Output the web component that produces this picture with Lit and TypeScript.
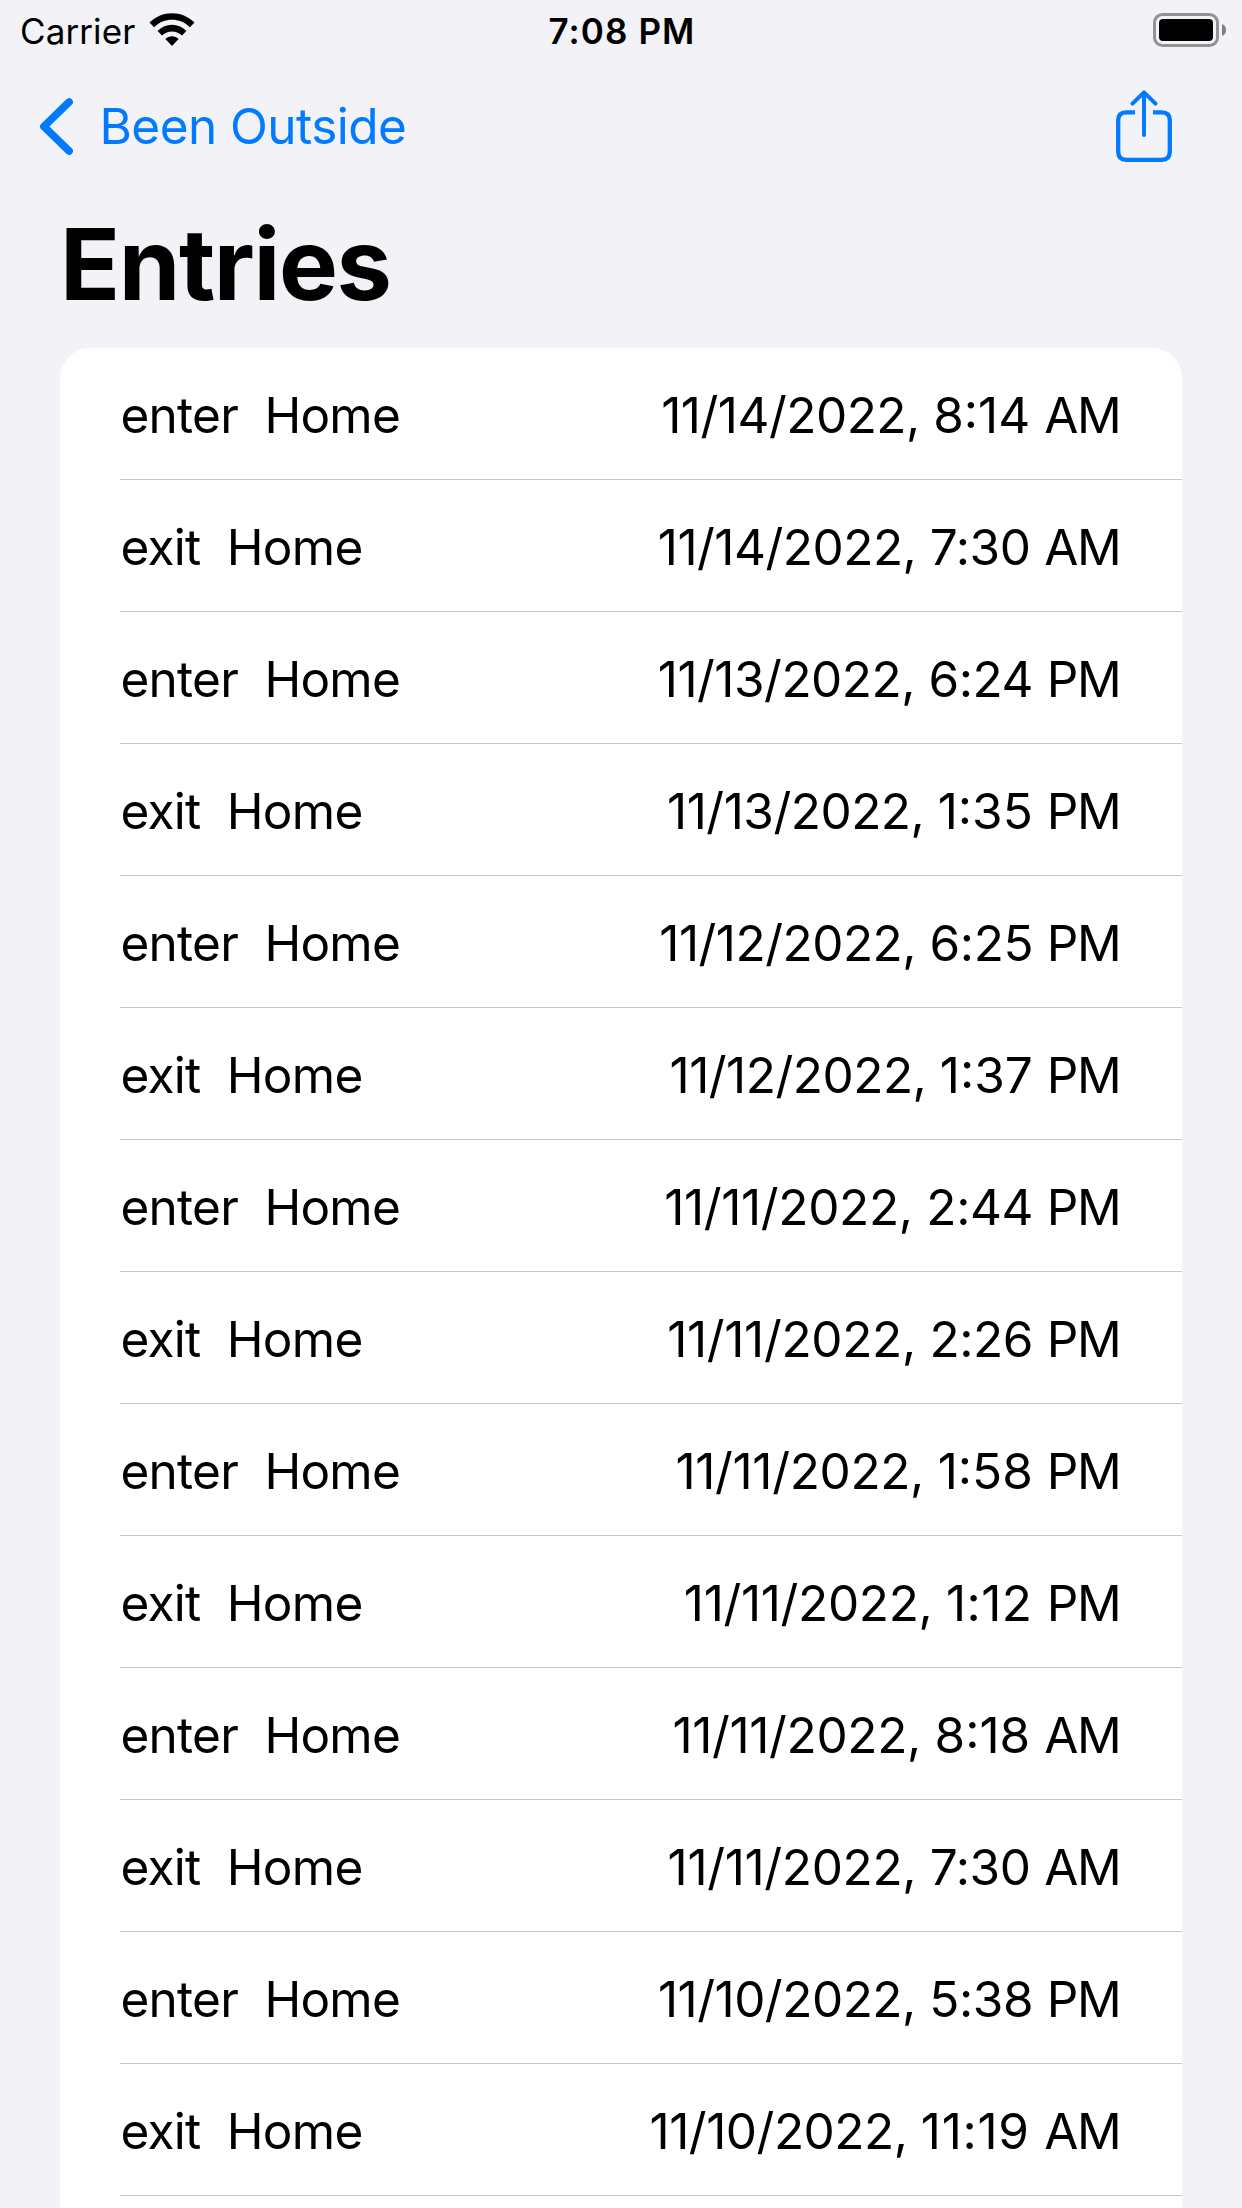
import { LitElement, html, css } from "lit";
import { customElement, property } from "lit/decorators.js";
import { styleMap } from "lit/directives/style-map.js";

interface Entry {
  kind: string;
  place: string;
  day: string;
  time: string;
  half: string;
}

const entry = (kind: string, day: string, time: string, half: string): Entry => ({
  kind,
  place: "Home",
  day,
  time,
  half,
});

const ENTRIES: Entry[] = [
  entry("enter", "11/14/2022", "8:14", "AM"),
  entry("exit", "11/14/2022", "7:30", "AM"),
  entry("enter", "11/13/2022", "6:24", "PM"),
  entry("exit", "11/13/2022", "1:35", "PM"),
  entry("enter", "11/12/2022", "6:25", "PM"),
  entry("exit", "11/12/2022", "1:37", "PM"),
  entry("enter", "11/11/2022", "2:44", "PM"),
  entry("exit", "11/11/2022", "2:26", "PM"),
  entry("enter", "11/11/2022", "1:58", "PM"),
  entry("exit", "11/11/2022", "1:12", "PM"),
  entry("enter", "11/11/2022", "8:18", "AM"),
  entry("exit", "11/11/2022", "7:30", "AM"),
  entry("enter", "11/10/2022", "5:38", "PM"),
  entry("exit", "11/10/2022", "11:19", "AM"),
];

/* Narrow ones get a little more room than the other digits. */
const tracking = (text: string, slack: number) => {
  const ones = text.split("1").length - 1;
  return { letterSpacing: `${((2 * ones - slack) / text.length).toFixed(3)}px` };
};

@customElement("status-bar")
export class StatusBar extends LitElement {
  static styles = css`
    :host {
      display: grid;
      grid-template-columns: 1fr auto 1fr;
      align-items: center;
      height: 60px;
      padding: 0 16px 0 20px;
      box-sizing: border-box;
      font-size: 35px;
      line-height: 42px;
    }
    .left {
      display: flex;
      align-items: center;
      gap: 14px;
    }
    .carrier {
      padding-top: 2px;
      letter-spacing: 0.1px;
    }
    .time {
      padding: 2px 2px 0 0;
      font-weight: 560;
      letter-spacing: 1.1px;
    }
    .battery {
      justify-self: end;
    }
    svg {
      display: block;
    }
  `;

  render() {
    return html`
      <div class="left">
        <span class="carrier">Carrier</span>
        <svg width="46" height="34" viewBox="0 0 46 34">
          <path d="M0.5 9.6 C13 -3 33 -3 45.500 9.600 L40.900 14.200 C31 4.400 15 4.400 5.100 14.200 Z" />
          <path d="M8.600 18 C16.800 9.500 29.200 9.500 37.400 18 L33 22.500 C27.300 17 18.700 17 13 22.500 Z" />
          <path d="M16.400 26 C20.200 22.200 25.800 22.200 29.600 26 L23 33 Z" />
        </svg>
      </div>
      <span class="time">7:08 PM</span>
      <svg class="battery" width="73" height="34" viewBox="0 0 73 34">
        <rect x="1.500" y="1.500" width="63" height="31" rx="8" fill="none" stroke="#929195" stroke-width="3" />
        <rect x="6" y="6" width="54" height="22" rx="4" />
        <path d="M69 11 C74.300 12.500 74.300 21.500 69 23 Z" fill="#7f7f83" />
      </svg>
    `;
  }
}

@customElement("nav-bar")
export class NavBar extends LitElement {
  @property() back = "";

  static styles = css`
    :host {
      display: flex;
      justify-content: space-between;
      align-items: center;
      height: 132px;
      padding: 0 70px 0 40px;
      box-sizing: border-box;
      color: #007aff;
      font-size: 49.5px;
    }
    .back {
      display: flex;
      align-items: center;
      gap: 26.5px;
      letter-spacing: -0.55px;
    }
    svg {
      display: block;
      fill: none;
      stroke: currentColor;
    }
  `;

  render() {
    return html`
      <div class="back">
        <svg width="33" height="57" viewBox="0 0 33 57" stroke-width="7.600" stroke-linecap="round" stroke-linejoin="round">
          <path d="M29.100 4 L3.900 28.500 L29.100 53" />
        </svg>
        <span>${this.back}</span>
      </div>
      <svg width="56" height="72" viewBox="0 0 56 72" stroke-width="4.300">
        <path d="M19 22.300 H10.200 Q2.200 22.300 2.200 30.300 V61.800 Q2.200 69.800 10.200 69.800 H45.800 Q53.800 69.800 53.800 61.800 V30.300 Q53.800 22.300 45.800 22.300 H37" />
        <path d="M28 2.500 V45 M16.500 13.700 L28 2.300 L39.500 13.700" stroke-width="4" stroke-linecap="round" stroke-linejoin="round" />
      </svg>
    `;
  }
}

@customElement("entry-row")
export class EntryRow extends LitElement {
  @property({ attribute: false }) entry!: Entry;

  static styles = css`
    :host {
      display: block;
      padding-left: 60px;
    }
    .row {
      display: flex;
      justify-content: space-between;
      align-items: center;
      height: 132px;
      padding: 3px 61.4px 0 0.5px;
      box-sizing: border-box;
      border-bottom: 1px solid #c6c6c8;
      font-size: 49.5px;
      white-space: pre;
    }
    .name {
      letter-spacing: -0.75px;
      word-spacing: 0;
    }
    .half {
      letter-spacing: -1.2px;
    }
  `;

  render() {
    const { kind, place, day, time, half } = this.entry;
    const date = `${day}, `;
    const clock = `${time} `;
    return html`
      <div class="row">
        <span class="name">${kind}  ${place}</span>
        <span class="date"><span style=${styleMap(tracking(date, 12))}>${date}</span><span style=${styleMap(tracking(clock, 2))}>${clock}</span><span class="half">${half}</span></span>
      </div>
    `;
  }
}

@customElement("app-root")
export class AppRoot extends LitElement {
  static styles = css`
    :host {
      display: block;
      height: 2208px;
      overflow: hidden;
      background: #f2f2f7;
      color: #000;
      font-family: Inter, "Liberation Sans", sans-serif;
    }
    .title {
      margin: 0;
      height: 156px;
      padding: 0 60px;
      font-size: 99px;
      line-height: 144px;
      font-weight: 700;
      letter-spacing: -1.4px;
    }
    .card {
      margin: 0 60px;
      height: 1900px;
      border-radius: 30px 30px 0 0;
      background: #fff;
    }
  `;

  render() {
    return html`
      <status-bar></status-bar>
      <nav-bar back="Been Outside"></nav-bar>
      <h1 class="title">Entries</h1>
      <div class="card">
        ${ENTRIES.map((item) => html`<entry-row .entry=${item}></entry-row>`)}
      </div>
    `;
  }
}
